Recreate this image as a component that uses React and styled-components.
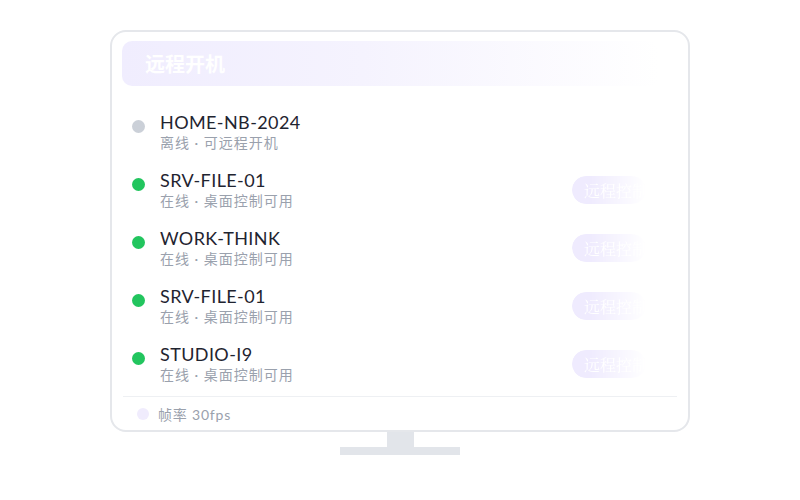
import React from 'react'
import styled, { createGlobalStyle } from 'styled-components'

const GlobalStyle = createGlobalStyle`
  html, body {
    margin: 0;
    padding: 0;
    background: #ffffff;
  }
  body {
    font-family: Lato, "Noto Sans CJK SC", sans-serif;
  }
`

const Page = styled.div`
  width: 800px;
  height: 500px;
  display: flex;
  flex-direction: column;
  align-items: center;
  padding-top: 30px;
  box-sizing: border-box;
`

const Monitor = styled.div`
  width: 580px;
  height: 402px;
  box-sizing: border-box;
  border: 2px solid #e5e7eb;
  border-radius: 16px;
  padding: 9px 11px 0 10px;
  display: flex;
  flex-direction: column;
  background: #ffffff;
`

const Header = styled.div`
  height: 45px;
  border-radius: 10px;
  display: flex;
  align-items: center;
  padding-left: 23px;
  margin-right: 18px;
  background: linear-gradient(90deg, #f0edfe 0%, #f5f3fe 45%, rgba(255, 255, 255, 0) 100%);
`

const HeaderTitle = styled.span`
  font-family: "Noto Sans CJK SC", sans-serif;
  font-size: 20px;
  font-weight: 700;
  color: #ffffff;
`

const List = styled.div`
  margin-top: 17px;
  display: flex;
  flex-direction: column;
`

const Row = styled.div`
  display: flex;
  align-items: center;
  padding: 9px 0 9px 10px;
  height: 40px;
`

const Dot = styled.span`
  width: 13px;
  height: 13px;
  border-radius: 50%;
  flex-shrink: 0;
  align-self: flex-start;
  margin-top: 8px;
  background: ${p => (p.$online ? '#22c55e' : '#cbd0d8')};
`

const Info = styled.div`
  flex: 1;
  margin-left: 15px;
  display: flex;
  flex-direction: column;
`

const Name = styled.div`
  font-family: Lato, "Noto Sans CJK SC", sans-serif;
  font-size: 18px;
  line-height: 21px;
  margin-bottom: 1px;
  color: #1f2430;
  letter-spacing: 0.4px;
`

const Status = styled.div`
  font-family: Lato, "Noto Sans CJK SC", sans-serif;
  font-size: 14px;
  line-height: 18px;
  color: #9aa1ad;
  letter-spacing: 1px;
`

const ControlButton = styled.button`
  width: 74px;
  height: 28px;
  margin-right: 31px;
  border: none;
  border-radius: 14px;
  padding: 0 0 0 12px;
  text-align: left;
  white-space: nowrap;
  overflow: hidden;
  font-family: "Noto Serif CJK SC", "AR PL UMing CN", serif;
  font-size: 16px;
  color: #ffffff;
  background: #efebfe;
  -webkit-mask-image: linear-gradient(90deg, #000 25%, rgba(0, 0, 0, 0) 100%);
  mask-image: linear-gradient(90deg, #000 25%, rgba(0, 0, 0, 0) 100%);
`

const Footer = styled.div`
  margin-top: 3px;
  border-top: 1px solid #eef0f3;
  flex: 1;
  display: flex;
  align-items: center;
  padding-left: 14px;
  margin-left: 1px;
`

const FooterDot = styled.span`
  width: 12px;
  height: 12px;
  border-radius: 50%;
  background: #f0ecfd;
`

const FooterText = styled.span`
  margin-left: 9px;
  font-family: Lato, "Noto Sans CJK SC", sans-serif;
  font-size: 14px;
  letter-spacing: 0.8px;
  color: #9aa1ad;
`

const Neck = styled.div`
  width: 27px;
  height: 15px;
  background: #e2e5ea;
`

const Base = styled.div`
  width: 120px;
  height: 8px;
  background: #e2e5ea;
`

const devices = [
  { name: 'HOME-NB-2024', online: false, status: '离线 · 可远程开机' },
  { name: 'SRV-FILE-01', online: true, status: '在线 · 桌面控制可用' },
  { name: 'WORK-THINK', online: true, status: '在线 · 桌面控制可用' },
  { name: 'SRV-FILE-01', online: true, status: '在线 · 桌面控制可用' },
  { name: 'STUDIO-I9', online: true, status: '在线 · 桌面控制可用' },
]

export default function App() {
  return (
    <>
      <GlobalStyle />
      <Page>
        <Monitor>
          <Header>
            <HeaderTitle>远程开机</HeaderTitle>
          </Header>
          <List>
            {devices.map((d, i) => (
              <Row key={i}>
                <Dot $online={d.online} />
                <Info>
                  <Name>{d.name}</Name>
                  <Status>{d.status}</Status>
                </Info>
                {d.online && <ControlButton>远程控制</ControlButton>}
              </Row>
            ))}
          </List>
          <Footer>
            <FooterDot />
            <FooterText>帧率 30fps</FooterText>
          </Footer>
        </Monitor>
        <Neck />
        <Base />
      </Page>
    </>
  )
}
